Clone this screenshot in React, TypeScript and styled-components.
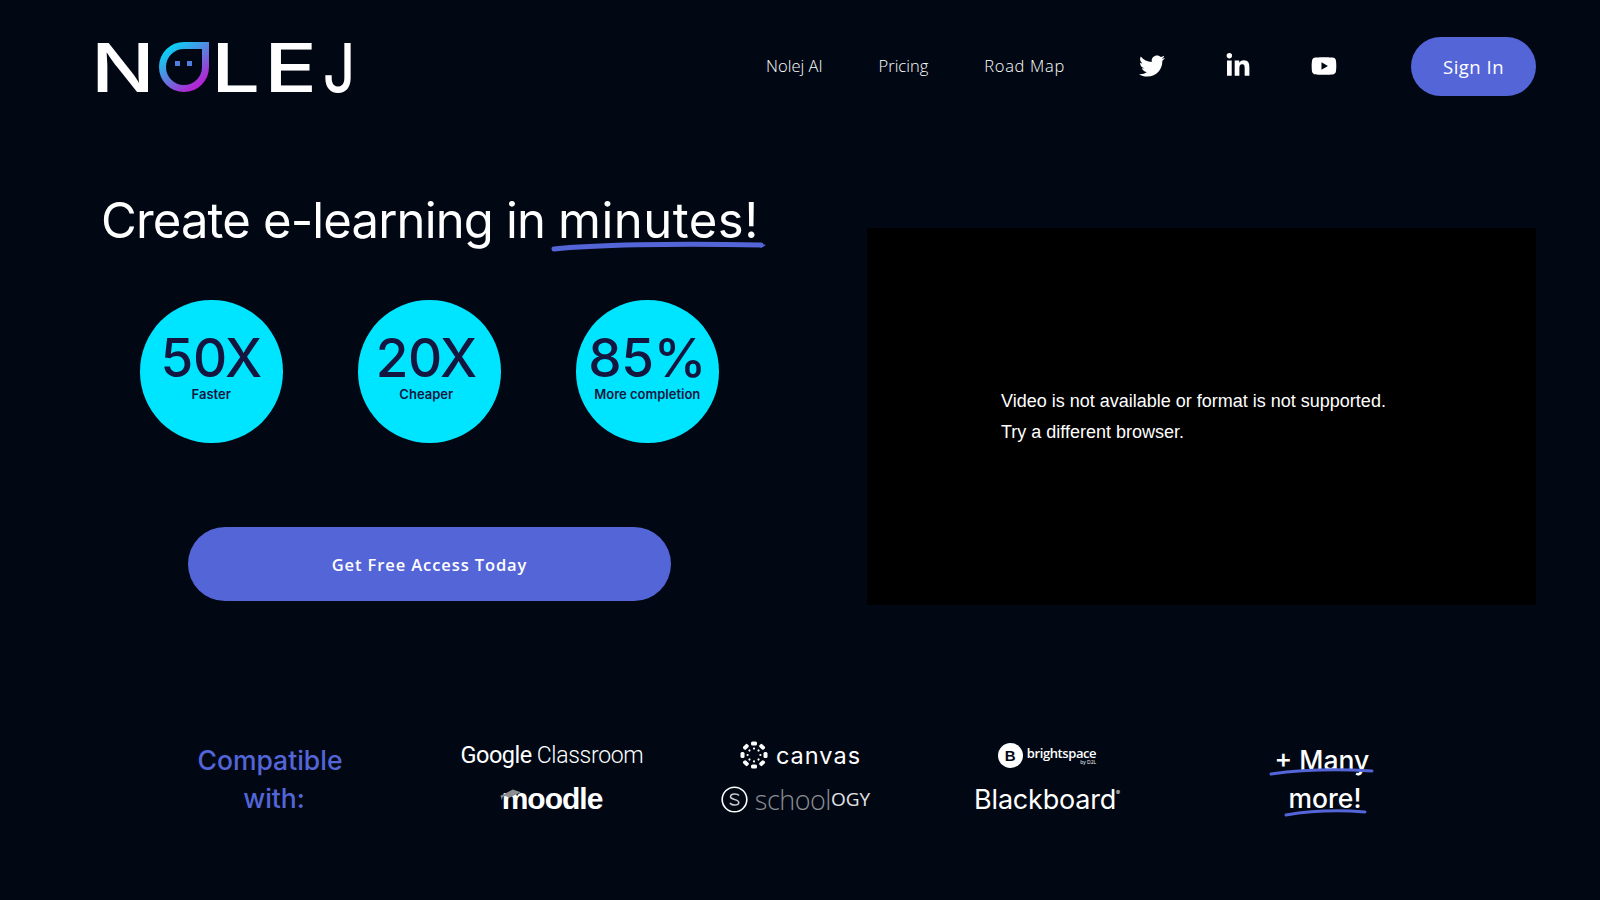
import React from 'react';
import styled, { createGlobalStyle } from 'styled-components';
import { FaTwitter, FaLinkedinIn, FaYoutube } from 'react-icons/fa';

const GlobalStyle = createGlobalStyle`
  html, body {
    margin: 0;
    background: #010814;
  }
  * {
    box-sizing: border-box;
  }
`;

const Page = styled.div`
  width: 1600px;
  height: 900px;
  overflow: hidden;
  padding: 37px 64px 0 97px;
  background: #010814;
  color: #fff;
  font-family: Inter, 'Liberation Sans', sans-serif;
`;

const Header = styled.header`
  display: flex;
  align-items: center;
  height: 59px;
`;

const Logo = styled.div`
  display: flex;
  align-items: center;
  height: 50px;
  font-family: Inter, sans-serif;
  font-size: 68px;
  font-weight: 500;
  line-height: 50px;
`;

const LogoLetter = styled.span<{ $width: number; $gap: number; $scale: number; $offset?: number }>`
  display: block;
  width: ${({ $width }) => $width}px;
  margin-right: ${({ $gap }) => $gap}px;
  transform: translateX(${({ $offset }) => $offset ?? 0}px) scaleX(${({ $scale }) => $scale});
  transform-origin: left center;
`;

const Nav = styled.nav`
  display: flex;
  align-items: center;
  gap: 56px;
  margin-left: auto;
  margin-top: -2px;
  font-family: 'Open Sans', sans-serif;
  font-size: 16.5px;
  font-weight: 300;
`;

const NavItem = styled.span<{ $spacing?: number }>`
  letter-spacing: ${({ $spacing }) => $spacing ?? 0}px;
`;

const Socials = styled.div`
  display: flex;
  align-items: center;
  gap: 60px;
  margin-left: 74px;
  margin-top: -2px;
  color: #fff;

  svg {
    display: block;
    width: 26px;
    height: 26px;
  }
`;

const SignIn = styled.button`
  width: 125px;
  height: 59px;
  margin-left: 74px;
  border: 0;
  border-radius: 30px;
  background: #5465d8;
  color: #fff;
  font-family: 'Open Sans', sans-serif;
  font-size: 18.5px;
  font-weight: 500;
  letter-spacing: 0.5px;
`;

const Hero = styled.section`
  display: grid;
  grid-template-columns: 770px 669px;
  margin-top: 94px;
`;

const Title = styled.h1`
  margin: 0 0 0 4px;
  font-size: 49px;
  font-weight: 400;
  line-height: 62px;
  letter-spacing: -0.85px;
  white-space: nowrap;
`;

const Underlined = styled.span`
  position: relative;
  display: inline-block;
  letter-spacing: 0.5px;
`;

const Scribble = styled.svg<{ $left: number; $top: number; $width: number; $height: number }>`
  position: absolute;
  left: ${({ $left }) => $left}px;
  top: ${({ $top }) => $top}px;
  width: ${({ $width }) => $width}px;
  height: ${({ $height }) => $height}px;
  overflow: visible;
`;

const Stats = styled.div`
  display: flex;
  gap: 75.5px;
  margin: 48px 0 0 43px;
`;

const Stat = styled.div`
  display: flex;
  flex-direction: column;
  align-items: center;
  width: 142.5px;
  height: 142.5px;
  padding-top: 33px;
  border-radius: 50%;
  background: #00e5ff;
  color: #14163f;
`;

const StatValue = styled.div<{ $shift?: number }>`
  font-size: 53px;
  font-weight: 500;
  line-height: 50px;
  letter-spacing: -0.3px;
  transform: translateX(${({ $shift }) => $shift ?? 0}px);
`;

const StatLabel = styled.div<{ $shift?: number }>`
  font-size: 13px;
  font-weight: 600;
  line-height: 16px;
  margin-top: 3px;
  white-space: nowrap;
  transform: translateX(${({ $shift }) => $shift ?? 0}px);
`;

const Cta = styled.button`
  display: block;
  width: 483px;
  height: 74px;
  margin: 84.5px 0 0 91px;
  border: 0;
  border-radius: 37px;
  background: #5465d8;
  color: #fff;
  font-family: 'Open Sans', sans-serif;
  font-size: 16.5px;
  font-weight: 600;
  letter-spacing: 0.9px;
`;

const Video = styled.div`
  display: flex;
  flex-direction: column;
  justify-content: center;
  height: 377px;
  margin-top: 38px;
  padding: 1px 0 0 134px;
  background: #000;
  font-family: 'Liberation Sans', Arial, sans-serif;
  font-size: 18px;
  line-height: 31px;
`;

const Partners = styled.section`
  display: grid;
  grid-template-columns: 346px 218px 263px 246px 304px;
  margin-top: 131px;
`;

const PartnerColumn = styled.div`
  display: flex;
  flex-direction: column;
  align-items: center;
  gap: 6px;
`;

const Tagline = styled.div<{ $accent?: boolean }>`
  position: relative;
  margin-top: 5px;
  font-size: 26.5px;
  font-weight: 450;
  line-height: 38px;
  text-align: center;
  color: ${({ $accent }) => ($accent ? '#5465d8' : '#fff')};
`;

const TaglineLine = styled.span<{ $indent?: number }>`
  display: block;
  padding-left: ${({ $indent }) => $indent ?? 0}px;
`;

const LogoSlot = styled.div<{ $shift?: number }>`
  display: flex;
  align-items: center;
  justify-content: center;
  height: 38px;
  white-space: nowrap;
  margin-left: ${({ $shift }) => $shift ?? 0}px;
`;

const GoogleName = styled.span`
  font-family: Roboto, sans-serif;
  font-size: 23.5px;
  font-weight: 400;
  letter-spacing: -0.5px;
  margin-right: 5px;
`;

const ClassroomName = styled.span`
  font-family: Roboto, sans-serif;
  font-size: 23px;
  font-weight: 300;
  letter-spacing: -0.3px;
`;

const MoodleName = styled.span`
  position: relative;
  font-family: 'Liberation Sans', sans-serif;
  font-size: 30px;
  font-weight: 700;
  letter-spacing: -1px;
`;

const MoodleHat = styled.svg`
  position: absolute;
  left: -2px;
  top: 7px;
  width: 21px;
  height: 12px;
`;

const CanvasName = styled.span`
  margin-left: 8px;
  font-family: Inter, sans-serif;
  font-size: 23.5px;
  font-weight: 400;
  letter-spacing: 1px;
`;

const SchoolName = styled.span`
  margin-left: 7px;
  font-family: 'Open Sans', sans-serif;
  font-size: 27px;
  font-weight: 300;
  letter-spacing: -0.5px;
  color: #8b8d92;
`;

const OgyName = styled.span`
  font-family: 'Open Sans', sans-serif;
  font-size: 19px;
  font-weight: 500;
  color: #e4e4e6;
`;

const BrightBadge = styled.div`
  display: flex;
  align-items: center;
  justify-content: center;
  width: 25px;
  height: 25px;
  border-radius: 50%;
  background: #fff;
  color: #010814;
  font-family: 'Liberation Sans', sans-serif;
  font-size: 15px;
  font-weight: 700;
`;

const BrightText = styled.div`
  display: flex;
  flex-direction: column;
  align-items: flex-end;
  margin-left: 4px;
`;

const BrightName = styled.span`
  font-family: 'Open Sans', sans-serif;
  font-size: 13px;
  font-weight: 600;
  line-height: 14px;
  letter-spacing: -0.4px;
`;

const BrightBy = styled.span`
  font-family: 'Open Sans', sans-serif;
  font-size: 5px;
  line-height: 5px;
`;

const BlackboardName = styled.span`
  font-family: Inter, sans-serif;
  font-size: 27px;
  font-weight: 400;
  letter-spacing: -0.2px;
`;

const Registered = styled.sup`
  font-size: 6px;
  vertical-align: 14px;
  line-height: 0;
`;

const stats = [
  { value: '50X', label: 'Faster', valueShift: 0, labelShift: 0 },
  { value: '20X', label: 'Cheaper', valueShift: -3, labelShift: -3 },
  { value: '85%', label: 'More completion', valueShift: 0, labelShift: 0 },
];

const NolejDrop = () => (
  <svg width="50" height="50" viewBox="0 0 50 50" style={{ marginRight: 10 }}>
    <defs>
      <linearGradient id="dropGradient" x1="0.1" y1="0.1" x2="0.75" y2="0.95">
        <stop offset="0" stopColor="#0bd0f5" />
        <stop offset="0.5" stopColor="#5b7fe0" />
        <stop offset="1" stopColor="#b026d4" />
      </linearGradient>
    </defs>
    <path
      d="M25 3.5 H46.5 V25 A21.5 21.5 0 1 1 25 3.5 Z"
      fill="none"
      stroke="url(#dropGradient)"
      strokeWidth="7"
    />
    <rect x="16" y="19" width="5" height="5" fill="#4f7de0" />
    <rect x="28" y="19" width="5" height="5" fill="#4f7de0" />
  </svg>
);

const CanvasMark = () => (
  <svg width="28" height="28" viewBox="0 0 28 28">
    <g fill="#fff">
      {[0, 45, 90, 135, 180, 225, 270, 315].map((deg) => (
        <g key={deg} transform={`rotate(${deg} 14 14)`}>
          <rect x="11" y="0.5" width="6" height="4" rx="1.5" />
          <circle cx="14" cy="7.6" r="1.1" />
        </g>
      ))}
    </g>
  </svg>
);

const SchoologyMark = () => (
  <svg width="27" height="27" viewBox="0 0 27 27">
    <circle cx="13.5" cy="13.5" r="12.3" fill="none" stroke="#fff" strokeWidth="1.6" />
    <path
      d="M18 9.5 C16.5 7.5 10 7 9.5 10.5 C9 14 18 12.8 17.8 16.5 C17.6 20 10.5 19.5 9 17"
      fill="none"
      stroke="#c9c9cc"
      strokeWidth="1.5"
    />
  </svg>
);

export default function App() {
  return (
    <Page>
      <GlobalStyle />
      <Header>
        <Logo>
          <LogoLetter $width={53} $gap={9} $scale={1.24} $offset={-6}>N</LogoLetter>
          <NolejDrop />
          <LogoLetter $width={39} $gap={13} $scale={1.28} $offset={-8}>L</LogoLetter>
          <LogoLetter $width={41} $gap={13} $scale={1.3} $offset={-7}>E</LogoLetter>
          <LogoLetter $width={27} $gap={0} $scale={0.82} $offset={-2}>J</LogoLetter>
        </Logo>
        <Nav>
          <NavItem>Nolej AI</NavItem>
          <NavItem>Pricing</NavItem>
          <NavItem $spacing={0.7}>Road Map</NavItem>
        </Nav>
        <Socials>
          <FaTwitter />
          <FaLinkedinIn />
          <FaYoutube />
        </Socials>
        <SignIn>Sign In</SignIn>
      </Header>

      <Hero>
        <div>
          <Title>
            Create e-learning in{' '}
            <Underlined>
              minutes!
              <Scribble $left={-7} $top={50} $width={216} $height={12} viewBox="0 0 216 12" fill="none">
                <path d="M3 9 C40 5 120 3 210 5" stroke="#5465d8" strokeWidth="5" strokeLinecap="round" />
                <path d="M206 3 L215 5 L210 8 Z" fill="#5465d8" />
              </Scribble>
            </Underlined>
          </Title>
          <Stats>
            {stats.map((stat) => (
              <Stat key={stat.value}>
                <StatValue $shift={stat.valueShift}>{stat.value}</StatValue>
                <StatLabel $shift={stat.labelShift}>{stat.label}</StatLabel>
              </Stat>
            ))}
          </Stats>
          <Cta>Get Free Access Today</Cta>
        </div>
        <Video>
          <div>Video is not available or format is not supported.</div>
          <div>Try a different browser.</div>
        </Video>
      </Hero>

      <Partners>
        <PartnerColumn>
          <Tagline $accent>
            <TaglineLine>Compatible</TaglineLine>
            <TaglineLine $indent={8}>with:</TaglineLine>
          </Tagline>
        </PartnerColumn>
        <PartnerColumn>
          <LogoSlot>
            <GoogleName>Google</GoogleName>
            <ClassroomName>Classroom</ClassroomName>
          </LogoSlot>
          <LogoSlot>
            <MoodleName>
              moodle
              <MoodleHat viewBox="0 0 23 12">
                <path d="M0 7 L14 0 L23 3 L10 9 L6 7 L3 8 L2 12 L1 8 Z" fill="#8d8d8f" />
              </MoodleHat>
            </MoodleName>
          </LogoSlot>
        </PartnerColumn>
        <PartnerColumn>
          <LogoSlot $shift={16}>
            <CanvasMark />
            <CanvasName>canvas</CanvasName>
          </LogoSlot>
          <LogoSlot $shift={6}>
            <SchoologyMark />
            <SchoolName>school</SchoolName>
            <OgyName>OGY</OgyName>
          </LogoSlot>
        </PartnerColumn>
        <PartnerColumn>
          <LogoSlot>
            <BrightBadge>B</BrightBadge>
            <BrightText>
              <BrightName>brightspace</BrightName>
              <BrightBy>by D2L</BrightBy>
            </BrightText>
          </LogoSlot>
          <LogoSlot>
            <BlackboardName>
              Blackboard
              <Registered>®</Registered>
            </BlackboardName>
          </LogoSlot>
        </PartnerColumn>
        <PartnerColumn>
          <Tagline>
            <TaglineLine>+ Many</TaglineLine>
            <Scribble $left={-5} $top={27} $width={104} $height={8} viewBox="0 0 104 8" fill="none">
              <path d="M1 6 C30 2 70 1 102 3" stroke="#5465d8" strokeWidth="3" strokeLinecap="round" />
            </Scribble>
            <TaglineLine $indent={6}>more!</TaglineLine>
            <Scribble $left={10} $top={68} $width={82} $height={8} viewBox="0 0 82 8" fill="none">
              <path d="M1 6 C25 2 55 1 80 3" stroke="#5465d8" strokeWidth="3" strokeLinecap="round" />
            </Scribble>
          </Tagline>
        </PartnerColumn>
      </Partners>
    </Page>
  );
}
